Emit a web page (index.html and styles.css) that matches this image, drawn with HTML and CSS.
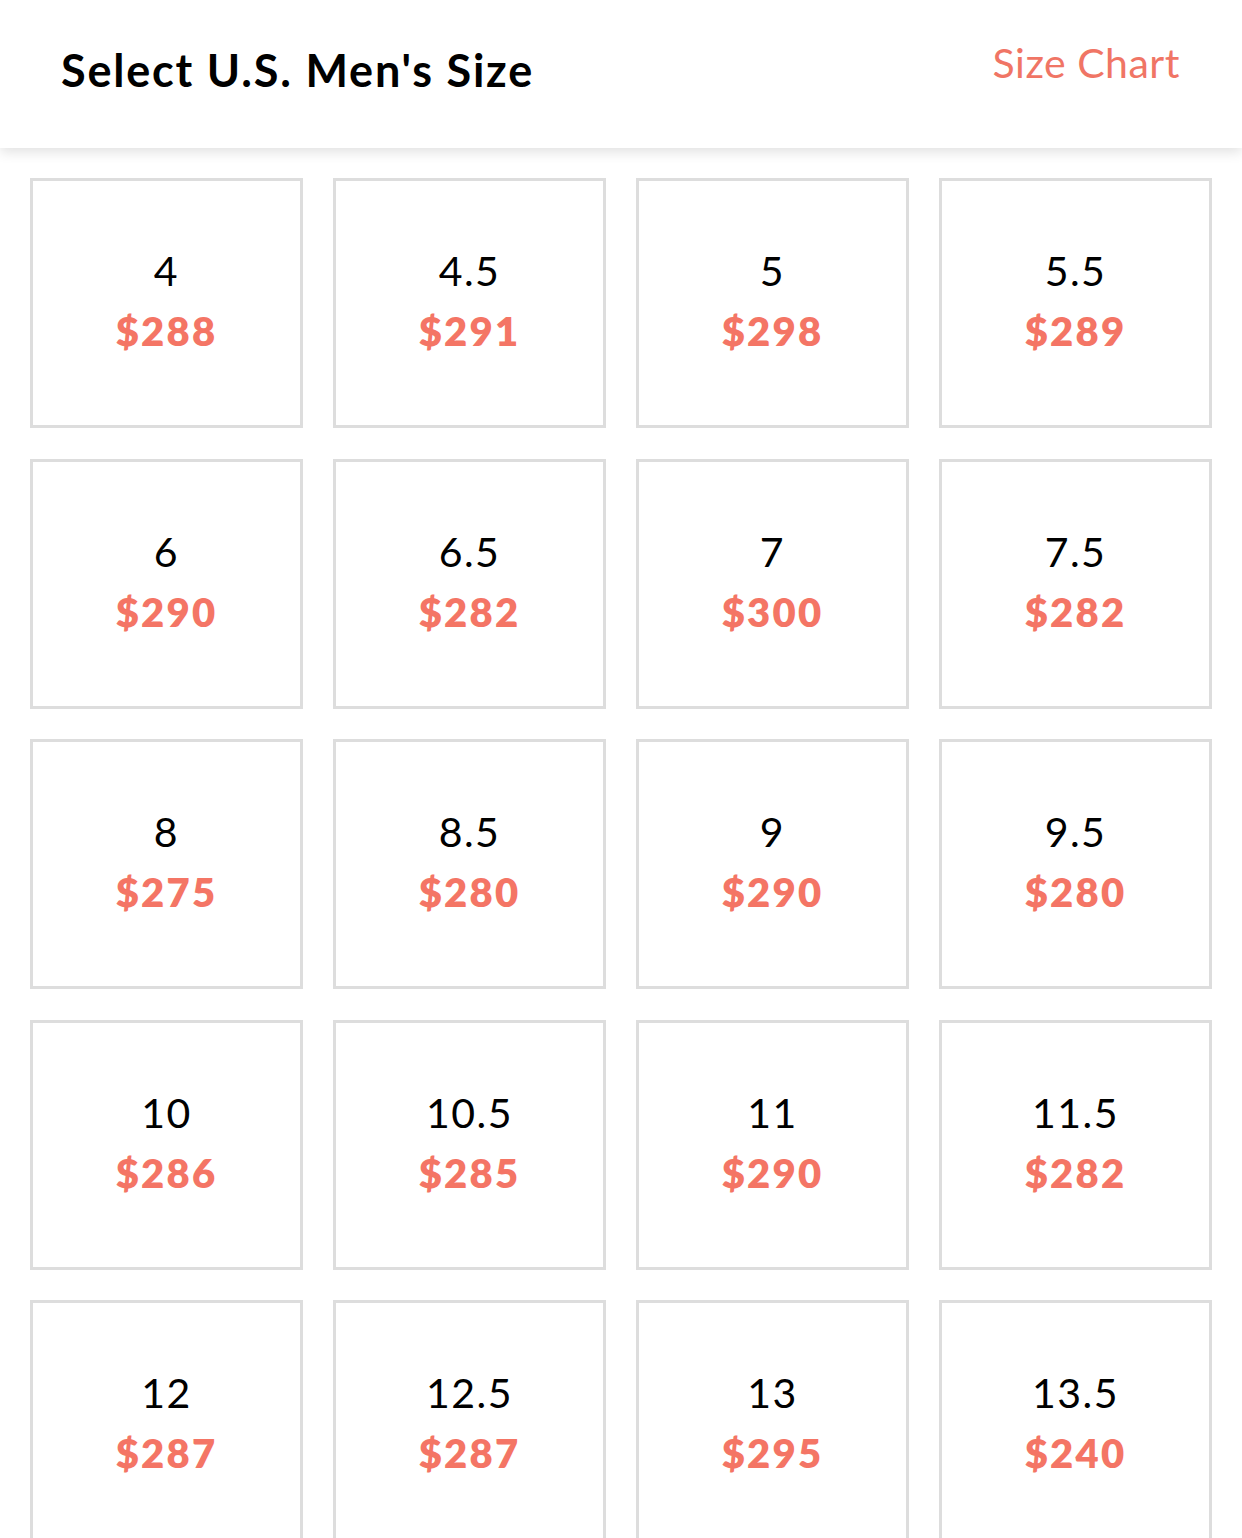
FILE: index.html
```html
<!DOCTYPE html>
<html>
<head>
<meta charset="utf-8">
<link rel="stylesheet" href="styles.css">
</head>
<body>
<header class="topbar">
  <h1 class="title">Select U.S. Men's Size</h1>
  <a class="chart-link">Size Chart</a>
</header>
<main class="grid">
  <div class="card"><span class="size">4</span><span class="price">$288</span></div>
  <div class="card"><span class="size">4.5</span><span class="price">$291</span></div>
  <div class="card"><span class="size">5</span><span class="price">$298</span></div>
  <div class="card"><span class="size">5.5</span><span class="price">$289</span></div>
  <div class="card"><span class="size">6</span><span class="price">$290</span></div>
  <div class="card"><span class="size">6.5</span><span class="price">$282</span></div>
  <div class="card"><span class="size">7</span><span class="price">$300</span></div>
  <div class="card"><span class="size">7.5</span><span class="price">$282</span></div>
  <div class="card"><span class="size">8</span><span class="price">$275</span></div>
  <div class="card"><span class="size">8.5</span><span class="price">$280</span></div>
  <div class="card"><span class="size">9</span><span class="price">$290</span></div>
  <div class="card"><span class="size">9.5</span><span class="price">$280</span></div>
  <div class="card"><span class="size">10</span><span class="price">$286</span></div>
  <div class="card"><span class="size">10.5</span><span class="price">$285</span></div>
  <div class="card"><span class="size">11</span><span class="price">$290</span></div>
  <div class="card"><span class="size">11.5</span><span class="price">$282</span></div>
  <div class="card"><span class="size">12</span><span class="price">$287</span></div>
  <div class="card"><span class="size">12.5</span><span class="price">$287</span></div>
  <div class="card"><span class="size">13</span><span class="price">$295</span></div>
  <div class="card"><span class="size">13.5</span><span class="price">$240</span></div>
</main>
</body>
</html>
```
FILE: styles.css
```css
html, body {
  margin: 0;
  padding: 0;
  background: #ffffff;
  font-family: Lato, "Open Sans", sans-serif;
}
body {
  height: 1538px;
  overflow: hidden;
}
.topbar {
  height: 148px;
  display: flex;
  align-items: center;
  justify-content: space-between;
  padding: 0 62px 0 61px;
  background: #fff;
  box-shadow: 0 4px 12px rgba(0, 0, 0, 0.12);
  position: relative;
  z-index: 1;
  box-sizing: border-box;
}
.title {
  margin: -8px 0 0 0;
  font-size: 45px;
  font-weight: 700;
  color: #000;
  letter-spacing: 1.8px;
}
.chart-link {
  font-size: 41px;
  font-weight: 400;
  color: #f07565;
  margin-top: -24px;
  letter-spacing: 0.5px;
}
.grid {
  display: grid;
  grid-template-columns: repeat(4, 273px);
  grid-auto-rows: 250px;
  column-gap: 30px;
  row-gap: 30.5px;
  padding: 30px 30px 0 30px;
}
.card {
  border: 3px solid #dddddd;
  box-sizing: border-box;
  display: flex;
  flex-direction: column;
  align-items: center;
  justify-content: center;
  padding-bottom: 4px;
}
.size {
  font-size: 41px;
  font-weight: 400;
  color: #000;
  line-height: 60px;
  letter-spacing: 1.5px;
}
.price {
  font-size: 40px;
  font-weight: 800;
  color: #f47565;
  line-height: 60px;
  letter-spacing: 2.2px;
}
```
